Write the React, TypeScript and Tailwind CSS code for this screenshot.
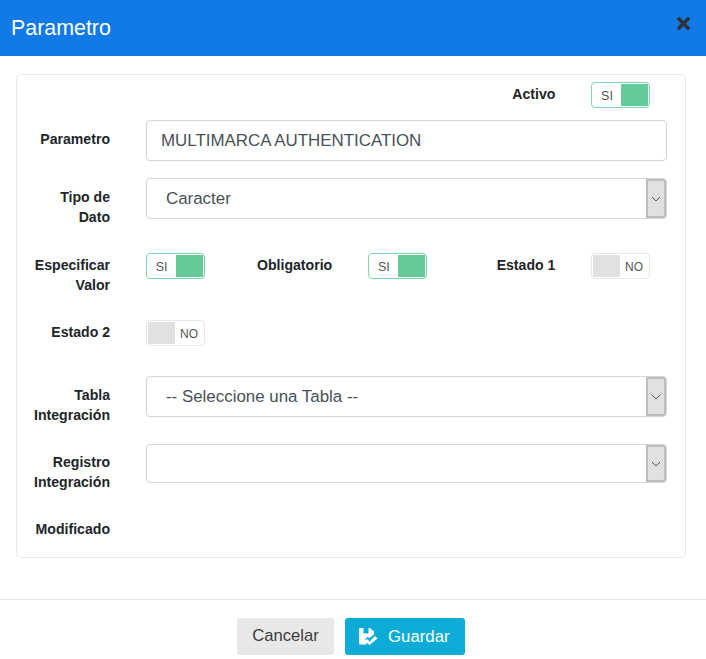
import { FaTimes } from 'react-icons/fa'

function Label({ children }: { children: React.ReactNode }) {
  return <div className="text-right text-[14.1px] font-bold leading-[20px] text-[#212529]">{children}</div>
}

function Toggle({ on }: { on: boolean }) {
  if (on) {
    return (
      <div className="flex h-[26px] w-[59px] items-stretch justify-end rounded-[4px] border border-[#7fd6ab] bg-white p-[1px]">
        <span className="flex-1 text-center text-[12.5px] leading-[24px] text-[#555]">SI</span>
        <span className="w-[27px] bg-[#66c998]" />
      </div>
    )
  }
  return (
    <div className="flex h-[26px] w-[59px] items-stretch rounded-[4px] border border-[#e6e6e6] bg-white p-[1px]">
      <span className="w-[27px] bg-[#e1e1e1]" />
      <span className="flex-1 text-center text-[12px] leading-[24px] text-[#555]">NO</span>
    </div>
  )
}

function SelectBox({ value, height }: { value?: string; height: string }) {
  return (
    <div className={`flex w-[521px] items-stretch rounded-[4px] border border-[#d4d4d4] bg-white ${height}`}>
      <div className="flex flex-1 items-center pl-[19px] text-[16.9px] text-[#495057]">{value}</div>
      <div className="flex w-[20px] items-center justify-center rounded-r-[3px] border-2 border-[#bdbdbd] bg-[#e1e1e1]">
        <svg width="10" height="6" viewBox="0 0 10 6" fill="none" stroke="#555" strokeWidth="1">
          <path d="M1 1l4 4 4-4" />
        </svg>
      </div>
    </div>
  )
}

function SaveIcon() {
  return (
    <svg width="19" height="17" viewBox="0 0 19 17" fill="#fff">
      <path d="M0 1Q0 0 1 0H4.500V5.500H9.500V0H11L15 3.500V6.500L10.500 10L8.500 9L6 11.500L7.500 14V16.500H1Q0 16.500 0 15.500Z" />
      <path d="M8 11L10.500 13.500L16 8L18.500 10.500L10.500 17L5.500 13Z" />
    </svg>
  )
}

export default function App() {
  return (
    <div className="flex min-h-[659px] w-[706px] flex-col bg-white font-['Liberation_Sans',Arial,sans-serif]">
      <div className="flex h-[56px] items-center justify-between bg-[#127ae6] pl-[11px] pr-[13px]">
        <h1 className="pt-[1px] text-[21.4px] text-white">Parametro</h1>
        <FaTimes className="mb-[9px] text-[19px] text-[#2f3133]" />
      </div>

      <div className="mx-[16px] mt-[18px] h-[484px] w-[670px] rounded-[5px] border border-[#e9e9e9] pt-[7px]">
        <div className="grid grid-cols-[93px_60px_91px_60px_92px_60px] gap-x-[35.6px]">
          <div className="col-start-5 pt-[2px]">
            <Label>Activo</Label>
          </div>
          <Toggle on />
        </div>

        <div className="mt-[12px] flex gap-[36px]">
          <div className="w-[93px] pt-[9px]">
            <Label>Parametro</Label>
          </div>
          <div className="flex h-[41px] w-[521px] items-center rounded-[4px] border border-[#d4d4d4] pl-[14px] text-[16.9px] text-[#495057]">
            MULTIMARCA AUTHENTICATION
          </div>
        </div>

        <div className="mt-[17px] flex gap-[36px]">
          <div className="w-[93px] pt-[9px]">
            <Label>Tipo de<br />Dato</Label>
          </div>
          <SelectBox value="Caracter" height="h-[41px]" />
        </div>

        <div className="mt-[26px] grid grid-cols-[93px_60px_91px_60px_92px_60px] gap-x-[35.6px]">
          <div className="pt-[2px]">
            <Label>Especificar<br />Valor</Label>
          </div>
          <Toggle on />
          <div className="pt-[2px]">
            <Label>Obligatorio</Label>
          </div>
          <Toggle on />
          <div className="pt-[2px]">
            <Label>Estado 1</Label>
          </div>
          <Toggle on={false} />
        </div>

        <div className="mt-[25px] flex gap-[36px]">
          <div className="w-[93px] pt-[2px]">
            <Label>Estado 2</Label>
          </div>
          <Toggle on={false} />
        </div>

        <div className="mt-[30px] flex gap-[36px]">
          <div className="w-[93px] pt-[9px]">
            <Label>Tabla<br />Integración</Label>
          </div>
          <SelectBox value="-- Seleccione una Tabla --" height="h-[41px]" />
        </div>

        <div className="mt-[19px] flex gap-[36px]">
          <div className="w-[93px] pt-[8px]">
            <Label>Registro<br />Integración</Label>
          </div>
          <SelectBox height="h-[39px]" />
        </div>

        <div className="mt-[27px] flex gap-[36px]">
          <div className="w-[93px]">
            <Label>Modificado</Label>
          </div>
        </div>
      </div>

      <div className="mt-[41px] flex justify-center gap-[11px] border-t border-[#e9e9e9] pr-[4px] pt-[18px]">
        <button className="h-[37px] w-[97px] rounded-[3px] bg-[#e8e8e8] text-[16.6px] text-[#3c3c3c]">Cancelar</button>
        <button className="flex h-[37px] w-[120px] items-center gap-[10px] rounded-[3px] bg-[#0cacd6] pl-[14px] text-[16.8px] text-white">
          <SaveIcon />
          Guardar
        </button>
      </div>
    </div>
  )
}
